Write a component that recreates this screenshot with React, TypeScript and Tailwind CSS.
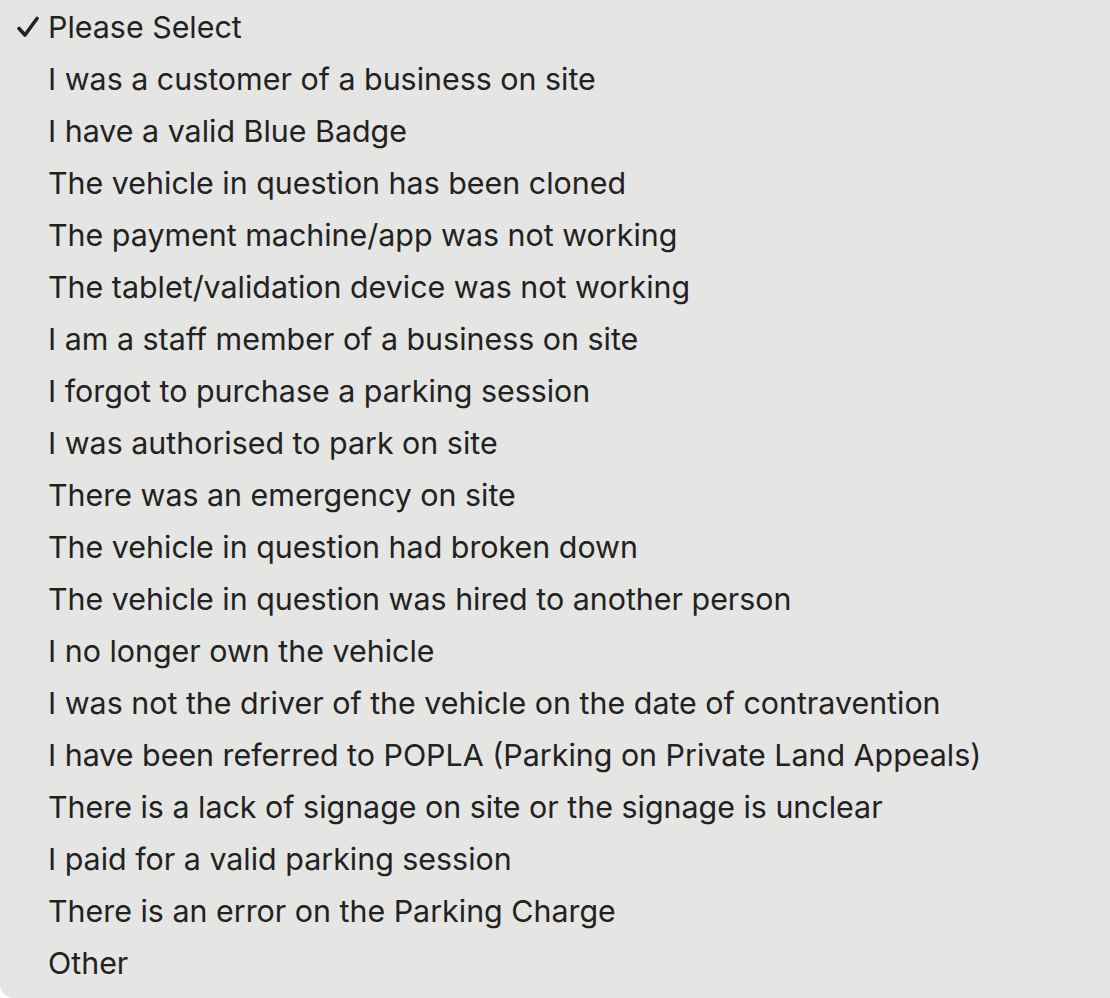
import React from "react";

const items = [
  "Please Select",
  "I was a customer of a business on site",
  "I have a valid Blue Badge",
  "The vehicle in question has been cloned",
  "The payment machine/app was not working",
  "The tablet/validation device was not working",
  "I am a staff member of a business on site",
  "I forgot to purchase a parking session",
  "I was authorised to park on site",
  "There was an emergency on site",
  "The vehicle in question had broken down",
  "The vehicle in question was hired to another person",
  "I no longer own the vehicle",
  "I was not the driver of the vehicle on the date of contravention",
  "I have been referred to POPLA (Parking on Private Land Appeals)",
  "There is a lack of signage on site or the signage is unclear",
  "I paid for a valid parking session",
  "There is an error on the Parking Charge",
  "Other",
];

export default function App() {
  return (
    <div className="w-[1110px] h-[998px] bg-white overflow-hidden">
      <div
        className="w-[1110px] h-[998px] bg-[#e5e5e4] rounded-bl-[14px] pt-px text-[#222222]"
        style={{ fontFamily: "Inter, 'Noto Sans', sans-serif" }}
      >
        {items.map((t, i) => (
          <div key={i} className="relative h-[52px] flex items-center pl-[48px] text-[30.4px] leading-none">
            {i === 0 && (
              <svg
                className="absolute left-[16px] top-[15px]"
                width="24"
                height="22"
                viewBox="0 0 24 22"
                fill="none"
              >
                <path d="M3 12.5 L9 19 L21 2.5" stroke="#222" strokeWidth="3.6" strokeLinecap="round" strokeLinejoin="round" />
              </svg>
            )}
            <span>{t}</span>
          </div>
        ))}
      </div>
    </div>
  );
}
